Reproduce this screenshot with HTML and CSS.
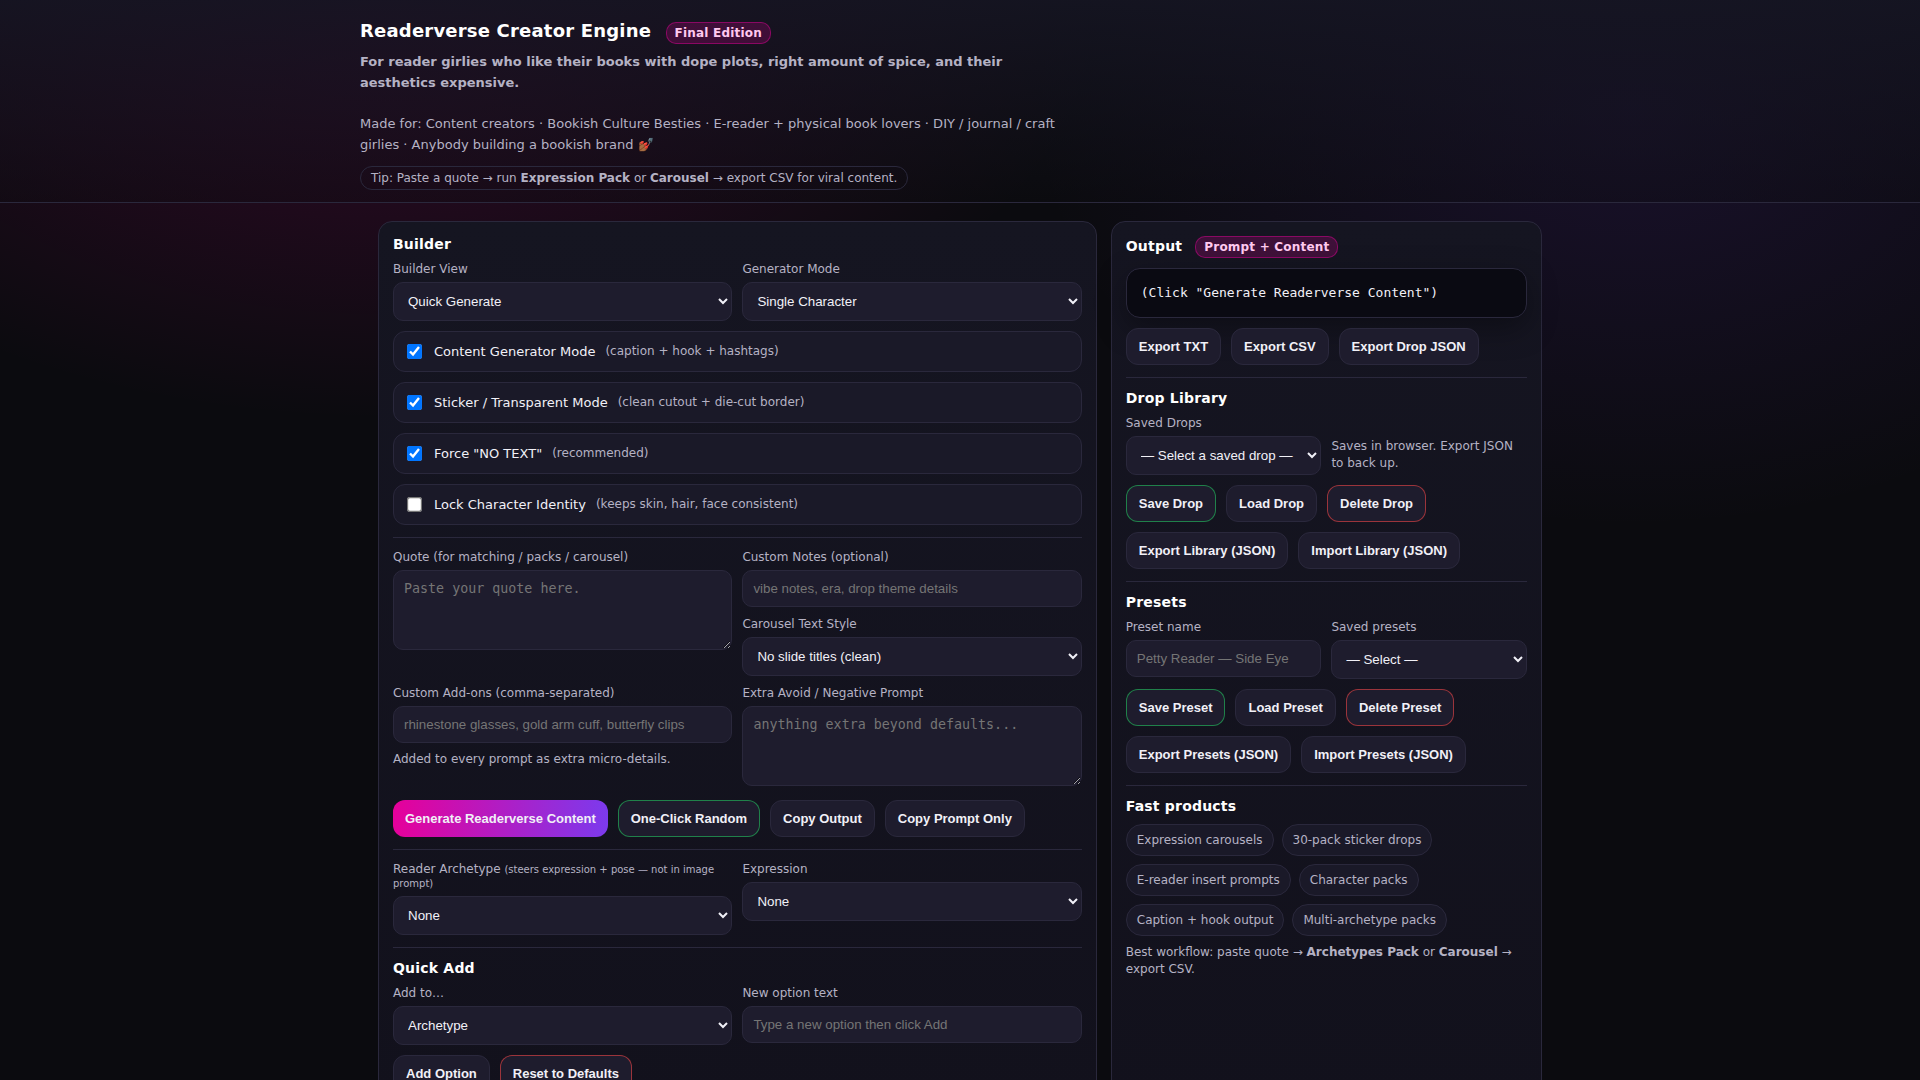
FILE: index.html
```
<!DOCTYPE html>
<html lang="en">
  <head>
    <meta charset="UTF-8" />
    <meta name="viewport" content="width=device-width, initial-scale=1.0" />
    <title>Readerverse Creator Engine</title>
    <link rel="stylesheet" href="styles.css">
  </head>
  <body>
    <header>
      <div class="inner">
        <h1>Readerverse Creator Engine <span class="badge">Final Edition</span></h1>
        <p class="sub">
          <strong>For reader girlies who like their books with dope plots, right amount of spice, and their aesthetics expensive.</strong>
          <br /><br />
          Made for: Content creators · Bookish Culture Besties · E-reader + physical book lovers · DIY / journal / craft girlies · Anybody building a bookish brand 💅🏾
        </p>
        <div class="tip">Tip: Paste a quote → run <b>Expression Pack</b> or <b>Carousel</b> → export CSV for viral content.</div>
      </div>
    </header>

    <main>
      <section class="panel">
        <h2>Builder</h2>
        <div class="grid">
          <div>
            <label for="view">Builder View</label>
            <select id="view"><option>Quick Generate</option></select>
          </div>
          <div>
            <label for="mode">Generator Mode</label>
            <select id="mode"><option>Single Character</option></select>
          </div>
          <label class="toggle">
            <input type="checkbox" checked />
            <span>Content Generator Mode</span>
            <span class="muted">(caption + hook + hashtags)</span>
          </label>
          <label class="toggle">
            <input type="checkbox" checked />
            <span>Sticker / Transparent Mode</span>
            <span class="muted">(clean cutout + die-cut border)</span>
          </label>
          <label class="toggle">
            <input type="checkbox" checked />
            <span>Force "NO TEXT"</span>
            <span class="muted">(recommended)</span>
          </label>
          <label class="toggle">
            <input type="checkbox" />
            <span>Lock Character Identity</span>
            <span class="muted">(keeps skin, hair, face consistent)</span>
          </label>
        </div>

        <hr />

        <div class="grid">
          <div>
            <label for="quote">Quote (for matching / packs / carousel)</label>
            <textarea id="quote" placeholder="Paste your quote here."></textarea>
          </div>
          <div class="stack">
            <div>
              <label for="notes">Custom Notes (optional)</label>
              <input id="notes" type="text" placeholder="vibe notes, era, drop theme details" />
            </div>
            <div>
              <label for="textStyle">Carousel Text Style</label>
              <select id="textStyle"><option>No slide titles (clean)</option></select>
            </div>
          </div>
          <div>
            <label for="addons">Custom Add-ons (comma-separated)</label>
            <input id="addons" type="text" placeholder="rhinestone glasses, gold arm cuff, butterfly clips" />
            <p class="hint">Added to every prompt as extra micro-details.</p>
          </div>
          <div>
            <label for="avoid">Extra Avoid / Negative Prompt</label>
            <textarea id="avoid" placeholder="anything extra beyond defaults..."></textarea>
          </div>
        </div>

        <div class="buttons">
          <button class="primary">Generate Readerverse Content</button>
          <button class="good">One-Click Random</button>
          <button>Copy Output</button>
          <button>Copy Prompt Only</button>
        </div>

        <hr />

        <div class="grid">
          <div>
            <label for="archetype">Reader Archetype <small>(steers expression + pose — not in image prompt)</small></label>
            <select id="archetype"><option>None</option></select>
          </div>
          <div>
            <label for="expression">Expression</label>
            <select id="expression"><option>None</option></select>
          </div>
        </div>

        <hr />

        <h2>Quick Add</h2>
        <div class="grid">
          <div>
            <label for="addTo">Add to…</label>
            <select id="addTo"><option>Archetype</option></select>
          </div>
          <div>
            <label for="newOption">New option text</label>
            <input id="newOption" type="text" placeholder="Type a new option then click Add" />
          </div>
        </div>
        <div class="buttons">
          <button>Add Option</button>
          <button class="bad">Reset to Defaults</button>
        </div>
      </section>

      <section class="panel">
        <h2>Output <span class="badge">Prompt + Content</span></h2>
        <pre class="output">(Click "Generate Readerverse Content")</pre>
        <div class="buttons">
          <button>Export TXT</button>
          <button>Export CSV</button>
          <button>Export Drop JSON</button>
        </div>

        <hr />

        <h2>Drop Library</h2>
        <label for="drops">Saved Drops</label>
        <div class="grid middle">
          <select id="drops"><option>— Select a saved drop —</option></select>
          <div class="muted">Saves in browser. Export JSON to back up.</div>
        </div>
        <div class="buttons">
          <button class="good">Save Drop</button>
          <button>Load Drop</button>
          <button class="bad">Delete Drop</button>
          <button>Export Library (JSON)</button>
          <button>Import Library (JSON)</button>
        </div>

        <hr />

        <h2>Presets</h2>
        <div class="grid">
          <div>
            <label for="presetName">Preset name</label>
            <input id="presetName" type="text" placeholder="Petty Reader — Side Eye" />
          </div>
          <div>
            <label for="presets">Saved presets</label>
            <select id="presets"><option>— Select —</option></select>
          </div>
        </div>
        <div class="buttons">
          <button class="good">Save Preset</button>
          <button>Load Preset</button>
          <button class="bad">Delete Preset</button>
          <button>Export Presets (JSON)</button>
          <button>Import Presets (JSON)</button>
        </div>

        <hr />

        <h2>Fast products</h2>
        <div class="pills">
          <span class="pill">Expression carousels</span>
          <span class="pill">30-pack sticker drops</span>
          <span class="pill">E-reader insert prompts</span>
          <span class="pill">Character packs</span>
          <span class="pill">Caption + hook output</span>
          <span class="pill">Multi-archetype packs</span>
        </div>
        <p class="hint">Best workflow: paste quote → <b>Archetypes Pack</b> or <b>Carousel</b> → export CSV.</p>
      </section>
    </main>
  </body>
</html>
```
FILE: styles.css
```
:root {
  --bg: #0b0b0f;
  --control: #1e1c2d;
  --line: #2a283c;
  --text: #f1f0f7;
  --muted: #b5b2c4;
  --pink: #e6009a;
  --purple: #7c3aed;
}
* {
  box-sizing: border-box;
}
body {
  margin: 0;
  color: var(--text);
  font-family: "DejaVu Sans", sans-serif;
  background: radial-gradient(1200px 700px at 20% 0, rgba(230, 0, 154, 0.18), transparent 60%),
    radial-gradient(1000px 700px at 85% 108px, rgba(124, 58, 237, 0.13), transparent 60%),
    var(--bg);
}

header {
  padding: 20px 18px 12px;
  border-bottom: 1px solid var(--line);
  background: linear-gradient(180deg, rgba(21, 21, 34, 0.9), rgba(11, 11, 15, 0.35));
}
.inner {
  max-width: 1200px;
  margin: 0 auto;
}
h1,
h2 {
  margin: 0 0 10px;
  color: #fff;
  font-size: 14px;
  letter-spacing: 0.2px;
}
h1 {
  margin-bottom: 8px;
  font-size: 18px;
}
.badge {
  display: inline-block;
  margin-left: 8px;
  padding: 3px 8px;
  border: 1px solid rgba(230, 0, 154, 0.45);
  border-radius: 10px;
  background: rgba(230, 0, 154, 0.2);
  color: #ffc9ef;
  font-size: 12px;
}
.sub {
  max-width: 720px;
  margin: 0 0 10px;
  color: var(--muted);
  font-size: 13px;
  line-height: 1.6;
}
.tip {
  display: inline-block;
  padding: 4px 10px;
  border: 1px solid var(--line);
  border-radius: 12px;
  color: var(--muted);
  font-size: 12px;
}

main {
  display: grid;
  grid-template-columns: 5fr 3fr;
  gap: 14px;
  max-width: 1200px;
  margin: 0 auto;
  padding: 18px;
}
.panel {
  padding: 14px;
  border: 1px solid var(--line);
  border-radius: 14px;
  background: linear-gradient(180deg, #151521, #12111c);
}
.grid {
  display: grid;
  grid-template-columns: 1fr 1fr;
  gap: 10px;
}
.stack {
  display: grid;
  gap: 10px;
}
.middle {
  align-items: center;
}
hr {
  margin: 12px 0;
  border: 0;
  border-top: 1px solid var(--line);
}

label {
  display: block;
  margin-bottom: 6px;
  color: var(--muted);
  font-size: 12px;
}
label small {
  font-size: 10px;
}
input[type="text"],
select,
textarea {
  width: 100%;
  padding: 10px;
  border: 1px solid var(--line);
  border-radius: 10px;
  background: var(--control);
  color: var(--text);
}
textarea {
  min-height: 80px;
  resize: vertical;
}
.toggle {
  display: flex;
  grid-column: 1 / -1;
  align-items: center;
  gap: 10px;
  margin: 0;
  padding: 10px;
  border: 1px solid var(--line);
  border-radius: 12px;
  background: #1a1928;
  color: var(--text);
  font-size: 13px;
}
.toggle input {
  transform: scale(1.15);
}
.muted,
.hint {
  color: var(--muted);
  font-size: 12px;
  line-height: 17px;
}
.hint {
  margin: 8px 0 0;
}

.buttons,
.pills {
  display: flex;
  flex-wrap: wrap;
  gap: 10px;
  margin-top: 10px;
}
button {
  padding: 10px 12px;
  border: 1px solid var(--line);
  border-radius: 12px;
  background: var(--control);
  color: var(--text);
  font-size: 13px;
  font-weight: 700;
  cursor: pointer;
}
.primary {
  border: 0;
  background: linear-gradient(90deg, var(--pink), var(--purple));
}
.good {
  border-color: rgba(34, 197, 94, 0.6);
}
.bad {
  border-color: rgba(239, 68, 68, 0.6);
}
.output {
  margin: 0;
  padding: 14px;
  border: 1px solid var(--line);
  border-radius: 14px;
  background: #0a0a12;
  box-shadow: 0 10px 30px rgba(0, 0, 0, 0.35);
  font-family: "DejaVu Sans Mono", monospace;
  font-size: 13px;
  line-height: 20px;
  white-space: pre-wrap;
}
.pills {
  gap: 8px;
}
.pill {
  padding: 8px 10px;
  border: 1px solid var(--line);
  border-radius: 999px;
  background: #1a1928;
  color: var(--muted);
  font-size: 12px;
}
```
